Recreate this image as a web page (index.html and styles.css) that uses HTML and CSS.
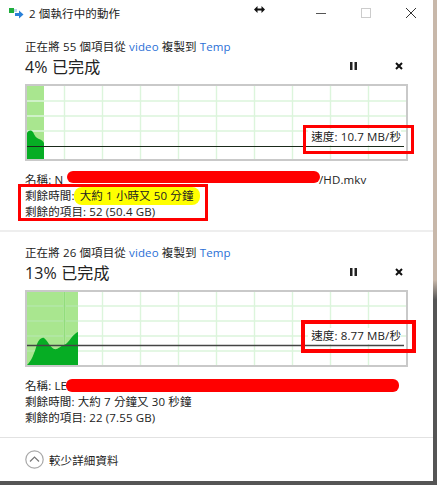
FILE: index.html
```html
<!DOCTYPE html>
<html>
<head>
    <meta charset="utf-8">
    <link rel="stylesheet" href="styles.css">
</head>
<body>
    <svg class="defs" width="0" height="0">
        <symbol id="vgrid" viewBox="0 0 379 73">
            <path d="M37.5 0V73M75.5 0V73M113.5 0V73M151.5 0V73M189.5 0V73M227.5 0V73M265.5 0V73M303.5 0V73M341.5 0V73" fill="none" stroke="#dcf5dc" stroke-width="1.4"/>
        </symbol>
    </svg>

    <div class="page">
        <div class="window">
            <div class="titlebar">
                <svg class="app-icon" width="15" height="11" viewBox="0 0 15 11">
                    <rect x="0" y="0" width="5" height="5" fill="#1fae3c"/>
                    <rect x="5" y="1" width="3" height="3" fill="#bcd6ea"/>
                    <path d="M6 5h4V2.500L14.500 6.500 10 10.500V8H6z" fill="#2a80d8"/>
                </svg>
                <span class="title">2 個執行中的動作</span>
                <svg class="resize-cursor" width="11" height="7" viewBox="0 0 11 7">
                    <path d="M0 3.500L3.500 0V2.500H7.500V0L11 3.500 7.500 7V4.500H3.500V7z" fill="#111"/>
                </svg>
                <div class="win-buttons">
                    <svg width="10" height="10" viewBox="0 0 10 10"><path d="M0 5.500H10" stroke="#555" stroke-width="1"/></svg>
                    <svg width="10" height="10" viewBox="0 0 10 10"><rect x="0.500" y="0.500" width="9" height="9" fill="none" stroke="#ccc"/></svg>
                    <svg width="10" height="10" viewBox="0 0 10 10"><path d="M0 0L10 10M10 0L0 10" stroke="#333" stroke-width="1"/></svg>
                </div>
            </div>

            <section class="job">
                <p class="line">正在將 55 個項目從 <a>video</a> 複製到 <a>Temp</a></p>
                <div class="job-head">
                    <h2>4% 已完成</h2>
                    <div class="job-actions">
                        <svg width="7" height="8" viewBox="0 0 7 8"><path d="M0 0h2.500v8H0zM4.500 0H7v8H4.500z" fill="#222"/></svg>
                        <svg width="8" height="8" viewBox="0 0 8 8"><path d="M1 1L7 7M7 1L1 7" stroke="#111" stroke-width="2"/></svg>
                    </div>
                </div>
                <div class="chart">
                    <svg class="plot" width="379" height="73" viewBox="0 0 379 73">
                        <rect x="0" y="0" width="17" height="73" fill="#a9e68f"/>
                        <path d="M0 15H379M0 30H379M0 45H379" stroke="#dcf5dc" stroke-width="1.4"/>
                        <use href="#vgrid" width="379" height="73"/>
                        <path d="M0 73V47C2 44 4 44 6 46C8 50 9 52 12 53C15 54 16 55 17 57V73Z" fill="#06ad24"/>
                        <path d="M0 60.500H377" stroke="#1a2a1a" stroke-width="1.2"/>
                    </svg>
                    <div class="speed speed-first">速度: 10.7 MB/秒</div>
                    <div class="redbox box-speed-first"></div>
                </div>
                <div class="details">
                    <p class="line name-row"><span class="name-head">名稱: N</span><span>/HD.mkv</span></p>
                    <p class="line">剩餘時間: <mark>大約 1 小時又 50 分鐘</mark></p>
                    <p class="line">剩餘的項目: 52 (50.4 GB)</p>
                    <div class="scribble scribble-first"></div>
                    <div class="redbox box-details"></div>
                </div>
            </section>

            <section class="job">
                <p class="line">正在將 26 個項目從 <a>video</a> 複製到 <a>Temp</a></p>
                <div class="job-head">
                    <h2>13% 已完成</h2>
                    <div class="job-actions">
                        <svg width="7" height="8" viewBox="0 0 7 8"><path d="M0 0h2.500v8H0zM4.500 0H7v8H4.500z" fill="#222"/></svg>
                        <svg width="8" height="8" viewBox="0 0 8 8"><path d="M1 1L7 7M7 1L1 7" stroke="#111" stroke-width="2"/></svg>
                    </div>
                </div>
                <div class="chart">
                    <svg class="plot" width="379" height="73" viewBox="0 0 379 73">
                        <rect x="0" y="0" width="51" height="73" fill="#a9e68f"/>
                        <path d="M0 14H379M0 29H379M0 44H379M0 59H379" stroke="#dcf5dc" stroke-width="1.4"/>
                        <use href="#vgrid" width="379" height="73"/>
                        <path d="M37.500 0V73" stroke="#92dd7c" stroke-width="1.4"/>
                        <path d="M0 14H51M0 29H51M0 44H51M0 59H51" stroke="#92dd7c" stroke-width="1"/>
                        <path d="M0 73C4 70 8 60 10 52C12 47 15 45 17 46C20 48 23 55 27 57C31 58 33 54 37 53C41 52 44 45 48 42C49 41 50 40 51 40V73Z" fill="#06ad24"/>
                        <path d="M0 53.500H377" stroke="#444" stroke-width="1.6"/>
                    </svg>
                    <div class="speed speed-second">速度: 8.77 MB/秒</div>
                    <div class="redbox box-speed-second"></div>
                </div>
                <div class="details">
                    <p class="line name-row"><span class="name-head">名稱: LE</span></p>
                    <p class="line">剩餘時間: 大約 7 分鐘又 30 秒鐘</p>
                    <p class="line">剩餘的項目: 22 (7.55 GB)</p>
                    <div class="scribble scribble-second"></div>
                </div>
            </section>

            <div class="footer">
                <svg width="19" height="19" viewBox="0 0 19 19">
                    <circle cx="9.500" cy="9.500" r="8.700" fill="none" stroke="#a8a8a8" stroke-width="1.2"/>
                    <path d="M5 11.500L9.500 7 14 11.500" fill="none" stroke="#777" stroke-width="1.2"/>
                </svg>
                <span>較少詳細資料</span>
            </div>
        </div>
        <div class="edge-right"></div>
    </div>
    <div class="edge-bottom"></div>
</body>
</html>
```

FILE: styles.css
```css
html, body {
    margin: 0;
    padding: 0;
    background-color: #fff;
    overflow: hidden;
}

body {
    width: 439px;
    height: 486px;
    font-family: "Open Sans", "Noto Sans CJK TC", sans-serif;
    font-size: 11.5px;
    letter-spacing: 0.12px;
    color: #222;
}

.defs {
    position: absolute;
}

.page {
    display: flex;
    height: 481px;
}

.window {
    width: 433px;
    height: 481px;
    flex: none;
    display: flex;
    flex-direction: column;
}

.edge-right {
    width: 4px;
    background: linear-gradient(#c8b8aa 0, #c8b8aa 280px, #555 300px, #555 100%);
}

.edge-bottom {
    width: 437px;
    height: 4px;
    background-color: #555;
}

.titlebar {
    height: 26px;
    display: flex;
    align-items: center;
    padding: 0 17px 0 9px;
    box-sizing: border-box;
}

.app-icon {
    margin-right: 5px;
}

.title {
    width: 225px;
}

.resize-cursor {
    margin-top: -8px;
}

.win-buttons {
    margin-left: auto;
    display: flex;
    gap: 35px;
}

.job {
    height: 206px;
    box-sizing: border-box;
    padding: 13px 25px 0;
    border-bottom: 2px solid #eee;
}

.job + .job {
    border-bottom: 1px solid #e2e2e2;
}

.line {
    margin: 0;
    line-height: 16px;
    height: 16px;
    white-space: nowrap;
}

.line a {
    color: #2a6fd6;
}

.job-head {
    display: flex;
    align-items: center;
    height: 21px;
}

h2 {
    margin: 0;
    font-size: 16px;
    font-weight: 400;
}

.job-actions {
    margin-left: auto;
    display: flex;
    align-items: center;
    gap: 38px;
    padding-right: 5px;
}

.chart {
    position: relative;
    margin-top: 8px;
    width: 383px;
    height: 77px;
    box-sizing: border-box;
    border: 2px solid #c9c9c9;
    background-color: #fff;
}

.plot {
    display: block;
}

.speed {
    position: absolute;
    right: 5px;
    top: 43px;
    padding-left: 3px;
    line-height: 16px;
    background-color: #fff;
    white-space: nowrap;
}

.speed-second {
    top: 36px;
}

.redbox {
    position: absolute;
    border: 3px solid #f00;
    box-sizing: border-box;
}

.box-speed-first {
    left: 276px;
    top: 39px;
    width: 111px;
    height: 29px;
}

.box-speed-second {
    left: 274px;
    top: 28px;
    width: 115px;
    height: 33px;
    border-width: 4px;
}

.details {
    position: relative;
    margin-top: 11px;
}

.name-head {
    display: inline-block;
    width: 294px;
}

mark {
    background-color: #ff0;
    color: inherit;
    padding: 1px 6px 2px;
    margin-left: -4px;
    border-radius: 8px;
}

.scribble {
    position: absolute;
    background-color: #f00;
    border-radius: 6px;
    height: 12px;
}

.scribble-first {
    left: 42px;
    top: -1px;
    width: 253px;
}

.scribble-second {
    left: 41px;
    top: 1px;
    width: 333px;
    height: 13px;
}

.box-details {
    left: -7px;
    top: 12px;
    width: 190px;
    height: 37px;
}

.footer {
    display: flex;
    align-items: center;
    gap: 5px;
    padding: 12px 25px 0;
}
```
